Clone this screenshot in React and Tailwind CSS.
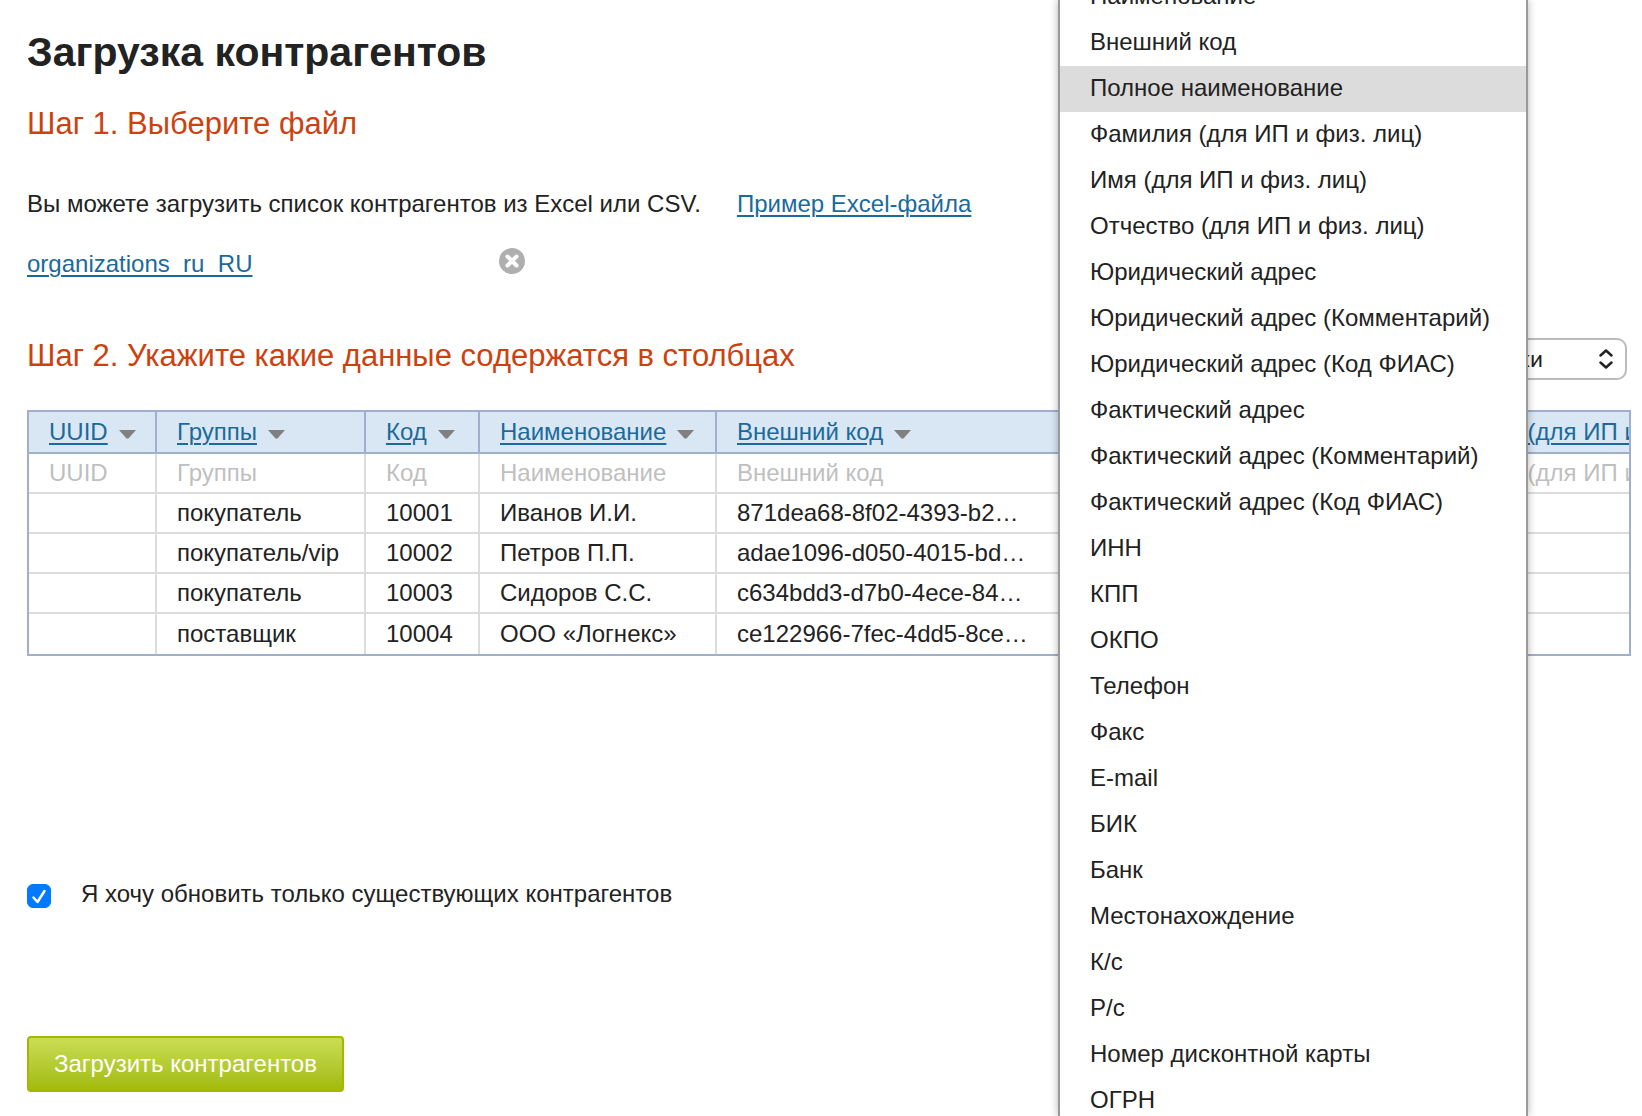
import React, { useState } from 'react';

const columns = [
  { title: 'UUID', width: 'w-[128px]' },
  { title: 'Группы', width: 'w-[209px]' },
  { title: 'Код', width: 'w-[114px]' },
  { title: 'Наименование', width: 'w-[237px]' },
  { title: 'Внешний код', width: 'w-[345px]' },
  { title: 'Полное наименование', width: 'w-[337px]' },
  { title: 'Фамилия (для ИП и физ. лиц)', width: 'w-[420px]' },
];

const rows = [
  ['', 'покупатель', '10001', 'Иванов И.И.', '871dea68-8f02-4393-b2…', '', ''],
  ['', 'покупатель/vip', '10002', 'Петров П.П.', 'adae1096-d050-4015-bd…', '', ''],
  ['', 'покупатель', '10003', 'Сидоров С.С.', 'c634bdd3-d7b0-4ece-84…', '', ''],
  ['', 'поставщик', '10004', 'ООО «Логнекс»', 'ce122966-7fec-4dd5-8ce…', '', ''],
];

const fields = [
  'Наименование',
  'Внешний код',
  'Полное наименование',
  'Фамилия (для ИП и физ. лиц)',
  'Имя (для ИП и физ. лиц)',
  'Отчество (для ИП и физ. лиц)',
  'Юридический адрес',
  'Юридический адрес (Комментарий)',
  'Юридический адрес (Код ФИАС)',
  'Фактический адрес',
  'Фактический адрес (Комментарий)',
  'Фактический адрес (Код ФИАС)',
  'ИНН',
  'КПП',
  'ОКПО',
  'Телефон',
  'Факс',
  'E-mail',
  'БИК',
  'Банк',
  'Местонахождение',
  'К/с',
  'Р/с',
  'Номер дисконтной карты',
  'ОГРН',
];

const linkClass = 'text-[#1b6a9c] underline decoration-2 underline-offset-3';

function StepTitle({ children }) {
  return <h2 className="text-[31px] leading-9 text-[#cc420e] whitespace-nowrap">{children}</h2>;
}

function ColumnsTable() {
  return (
    <div className="overflow-hidden border-2 border-[#9fafcd]">
      <table className="w-max table-fixed border-separate border-spacing-0 whitespace-nowrap">
        <thead>
          <tr className="bg-[#d9e7f4]">
            {columns.map((col) => (
              <th key={col.title} className={`${col.width} h-[42px] border-r-2 border-b-2 border-[#9fafcd] p-0 pl-5 text-left font-normal`}>
                <div className="flex items-center gap-[11px] leading-10">
                  <a href="#" className={linkClass}>{col.title}</a>
                  <svg width="17" height="9" viewBox="0 0 17 9" className="mt-1 shrink-0">
                    <path d="M0 0h17L9.5 8.5h-2z" fill="#808080" />
                  </svg>
                </div>
              </th>
            ))}
          </tr>
        </thead>
        <tbody className="leading-[38px]">
          <tr className="text-[#bfbfbf]">
            {columns.map((col) => (
              <td key={col.title} className="h-10 border-r-2 border-b-2 border-[#dcdcdc] p-0 pl-5">{col.title}</td>
            ))}
          </tr>
          {rows.map((row, i) => (
            <tr key={i} className="group">
              {row.map((cell, j) => (
                <td key={j} className="h-10 border-r-2 border-b-2 border-[#dcdcdc] p-0 pl-5 group-last:border-b-0">{cell}</td>
              ))}
            </tr>
          ))}
        </tbody>
      </table>
    </div>
  );
}

function FieldMenu({ selected, onSelect }) {
  return (
    <div className="absolute inset-y-0 right-[114px] w-[470px] overflow-hidden border-x-2 border-[#999] bg-white shadow-[0_0_8px_rgba(0,0,0,0.3)]">
      {/* the list is scrolled a little past its first item */}
      <ul className="-mt-[26px]">
        {fields.map((field) => (
          <li key={field}>
            <button
              onClick={() => onSelect(field)}
              className={`block w-full pb-0.5 pl-[30px] text-left leading-11 whitespace-nowrap ${field === selected ? 'bg-[#dcdcdc]' : 'bg-white'}`}
            >
              {field}
            </button>
          </li>
        ))}
      </ul>
    </div>
  );
}

export default function App() {
  const [selected, setSelected] = useState('Полное наименование');
  const [updateOnly, setUpdateOnly] = useState(true);

  return (
    <div className="relative min-h-screen overflow-hidden bg-white pt-7 pr-[11px] pb-6 pl-[27px] font-['Liberation_Sans',Arial,sans-serif] text-[24px] text-[#222]">
      <h1 className="mb-[30px] text-[41px] leading-12 font-bold">Загрузка контрагентов</h1>

      <StepTitle>Шаг 1. Выберите файл</StepTitle>
      <p className="mt-[46px] flex gap-9 leading-8 whitespace-nowrap">
        <span>Вы можете загрузить список контрагентов из Excel или CSV.</span>
        <a href="#" className={linkClass}>Пример Excel-файла</a>
      </p>
      <div className="mt-7 flex items-start leading-8">
        <div className="w-[472px]">
          <a href="#" className={linkClass}>organizations_ru_RU</a>
        </div>
        <button aria-label="Удалить файл">
          <svg width="26" height="26" viewBox="0 0 26 26">
            <circle cx="13" cy="13" r="13" fill="#afafaf" />
            <path d="M8.5 8.5l9 9m0-9l-9 9" stroke="#fff" strokeWidth="4" strokeLinecap="round" />
          </svg>
        </button>
      </div>

      <div className="mt-[58px] mb-[30px] flex h-[42px] items-start justify-between pr-1">
        <StepTitle>Шаг 2. Укажите какие данные содержатся в столбцах</StepTitle>
        <div className="relative">
          <select aria-label="Строки" className="h-[42px] w-[240px] appearance-none rounded-[10px] border-2 border-[#bbb] bg-white pr-[82px] text-right font-['Inter',sans-serif] text-[22px]">
            <option>строки</option>
          </select>
          <svg width="14" height="20" viewBox="0 0 14 20" fill="none" stroke="#222" strokeWidth="2.5" strokeLinecap="round" strokeLinejoin="round" className="pointer-events-none absolute top-[11px] right-3.5">
            <path d="M1.5 6.500L7 1.500l5.500 5M1.500 13.500L7 18.500l5.500-5" />
          </svg>
        </div>
      </div>

      <ColumnsTable />

      <label className="mt-56 flex w-max items-end gap-[30px] leading-7">
        <span className="relative block size-6">
          <input
            type="checkbox"
            checked={updateOnly}
            onChange={(e) => setUpdateOnly(e.target.checked)}
            className="block size-6 appearance-none rounded-md border border-[#bbb] bg-white checked:border-[#007aff] checked:bg-[#007aff]"
          />
          <svg viewBox="0 0 24 24" fill="none" stroke="#fff" strokeWidth="2.5" strokeLinecap="round" strokeLinejoin="round" className="pointer-events-none absolute inset-0">
            <path d="M6.500 13.500l4 4.500L17.500 7" />
          </svg>
        </span>
        Я хочу обновить только существующих контрагентов
      </label>

      <button className="mt-32 h-14 rounded-[4px] border-2 border-[#a3b800] bg-linear-to-b from-[#c9de52] to-[#a2ba00] px-[25px] leading-[52px] text-white">
        Загрузить контрагентов
      </button>

      <FieldMenu selected={selected} onSelect={setSelected} />
    </div>
  );
}
